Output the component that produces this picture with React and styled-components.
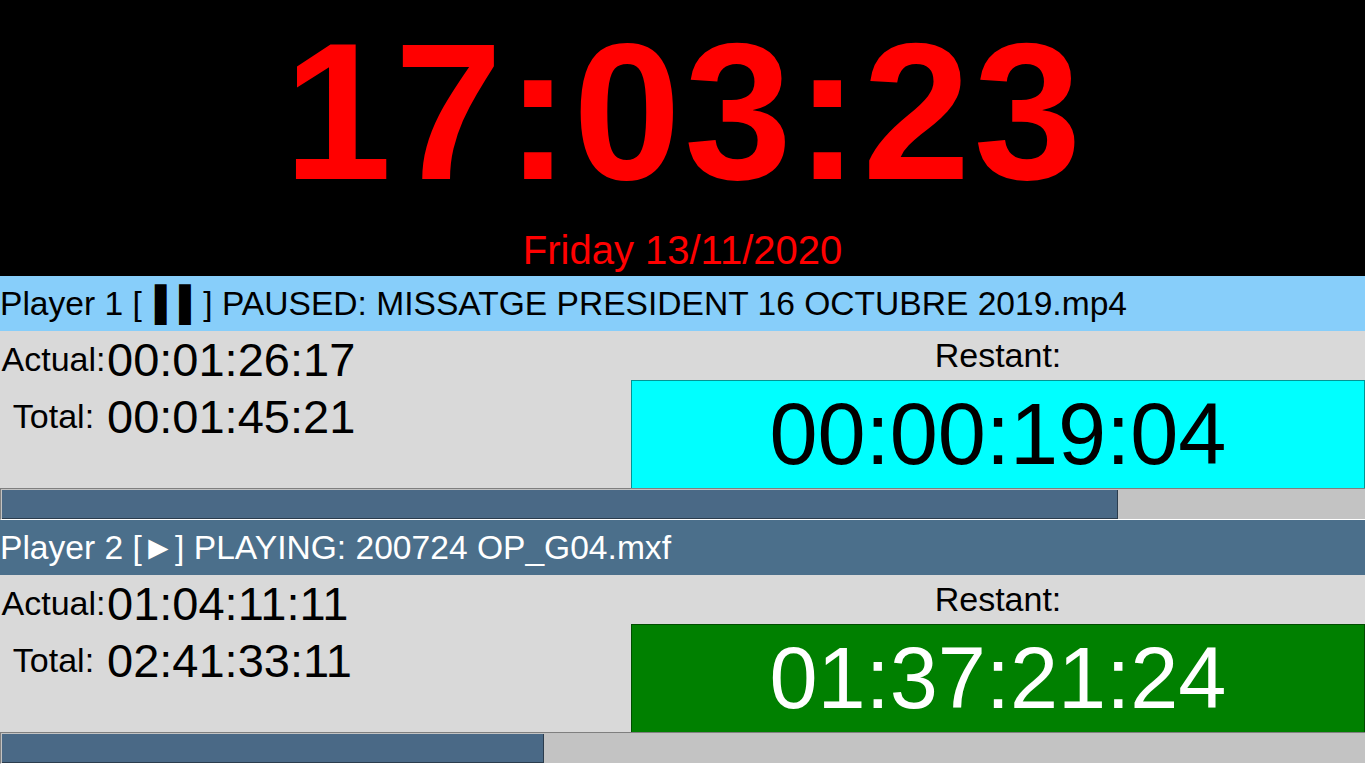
import React from "react";
import styled, { createGlobalStyle } from "styled-components";

const GlobalStyle = createGlobalStyle`
  html, body {
    margin: 0;
    padding: 0;
    background: #000000;
  }
  body {
    font-family: "Liberation Sans", Arial, sans-serif;
    overflow: hidden;
  }
  * { box-sizing: border-box; }
`;

const Page = styled.div`
  width: 1365px;
  height: 764px;
  display: flex;
  flex-direction: column;
  overflow: hidden;
`;

const ClockPanel = styled.section`
  height: 276px;
  background: #000000;
  color: #ff0000;
  display: flex;
  flex-direction: column;
  align-items: center;
  padding-top: 15px;
`;

const ClockTime = styled.div`
  font-size: 194px;
  font-weight: bold;
  line-height: 194px;
  height: 196px;
  letter-spacing: 3px;
  margin-right: -3px;
`;

const ClockDate = styled.div`
  font-size: 40px;
  line-height: 40px;
  margin-top: 19px;
`;

const PlayerPanel = styled.section`
  height: 244px;
  display: flex;
  flex-direction: column;
  background: #d9d9d9;
`;

const PlayerHeader = styled.header`
  height: 55px;
  line-height: 55px;
  font-size: 33.6px;
  padding-left: 0;
  white-space: nowrap;
  background: ${(p) => (p.$active ? "#4b6f8b" : "#87cefa")};
  color: ${(p) => (p.$active ? "#ffffff" : "#000000")};
`;

const StateGlyph = styled.span`
  letter-spacing: ${(p) => p.$spacing}px;
  padding-left: ${(p) => p.$lead}px;
`;

const PlayerBody = styled.div`
  height: 157px;
  display: grid;
  grid-template-columns: 631px 1fr;
`;

const TimesColumn = styled.div`
  display: flex;
  flex-direction: column;
`;

const TimeRow = styled.div`
  height: 57px;
  display: flex;
  align-items: center;
`;

const TimeLabel = styled.span`
  width: 107px;
  text-align: center;
  font-size: 34px;
  line-height: 57px;
  color: #000000;
`;

const TimeValue = styled.span`
  font-size: 47px;
  line-height: 57px;
  color: #000000;
`;

const RemainingColumn = styled.div`
  display: flex;
  flex-direction: column;
`;

const RemainingLabel = styled.div`
  height: 49px;
  line-height: 49px;
  font-size: 34px;
  text-align: center;
  color: #000000;
`;

const RemainingBox = styled.div`
  height: 108px;
  line-height: 107px;
  font-size: 86.5px;
  text-align: center;
  border: 1px solid ${(p) => (p.$tone === "green" ? "#004d00" : "#009595")};
  border-bottom: none;
  background: ${(p) => (p.$tone === "green" ? "#008000" : "#00ffff")};
  color: ${(p) => (p.$tone === "green" ? "#ffffff" : "#000000")};
`;

const ProgressTrack = styled.div`
  height: 32px;
  background: #c3c3c3;
  border-top: 1px solid #7f7f7f;
  border-bottom: 1px solid #ffffff;
  border-left: 1px solid #7f7f7f;
  padding: 1px 0 0 1px;
`;

const ProgressFill = styled.div`
  height: 29px;
  background: #4a6986;
  border-right: 1px solid #2b3c4d;
  border-bottom: 1px solid #2b3c4d;
`;

const toFrames = (tc) => {
  const [h, m, s, f] = tc.split(":").map(Number);
  return ((h * 60 + m) * 60 + s) * 25 + f;
};

const TRACK_WIDTH = 1363;

const players = [
  {
    id: 1,
    active: false,
    name: "Player 1",
    glyph: " \u258C\u258C",
    glyphSpacing: 0.5,
    glyphLead: 3,
    state: "PAUSED",
    file: "MISSATGE PRESIDENT 16 OCTUBRE 2019.mp4",
    actual: "00:01:26:17",
    total: "00:01:45:21",
    remaining: "00:00:19:04",
    tone: "cyan",
  },
  {
    id: 2,
    active: true,
    name: "Player 2",
    glyph: "\u25BA",
    glyphSpacing: 0,
    glyphLead: 0,
    state: "PLAYING",
    file: "200724 OP_G04.mxf",
    actual: "01:04:11:11",
    total: "02:41:33:11",
    remaining: "01:37:21:24",
    tone: "green",
  },
];

function Player({ p }) {
  const ratio = toFrames(p.actual) / toFrames(p.total);
  return (
    <PlayerPanel>
      <PlayerHeader $active={p.active}>
        {p.name} [
        <StateGlyph $spacing={p.glyphSpacing} $lead={p.glyphLead}>
          {p.glyph}
        </StateGlyph>
        ] {p.state}: {p.file}
      </PlayerHeader>
      <PlayerBody>
        <TimesColumn>
          <TimeRow>
            <TimeLabel>Actual:</TimeLabel>
            <TimeValue>{p.actual}</TimeValue>
          </TimeRow>
          <TimeRow>
            <TimeLabel>Total:</TimeLabel>
            <TimeValue>{p.total}</TimeValue>
          </TimeRow>
        </TimesColumn>
        <RemainingColumn>
          <RemainingLabel>Restant:</RemainingLabel>
          <RemainingBox $tone={p.tone}>{p.remaining}</RemainingBox>
        </RemainingColumn>
      </PlayerBody>
      <ProgressTrack>
        <ProgressFill style={{ width: `${Math.round(ratio * TRACK_WIDTH)}px` }} />
      </ProgressTrack>
    </PlayerPanel>
  );
}

export default function App() {
  return (
    <>
      <GlobalStyle />
      <Page>
        <ClockPanel>
          <ClockTime>17:03:23</ClockTime>
          <ClockDate>Friday 13/11/2020</ClockDate>
        </ClockPanel>
        {players.map((p) => (
          <Player key={p.id} p={p} />
        ))}
      </Page>
    </>
  );
}
